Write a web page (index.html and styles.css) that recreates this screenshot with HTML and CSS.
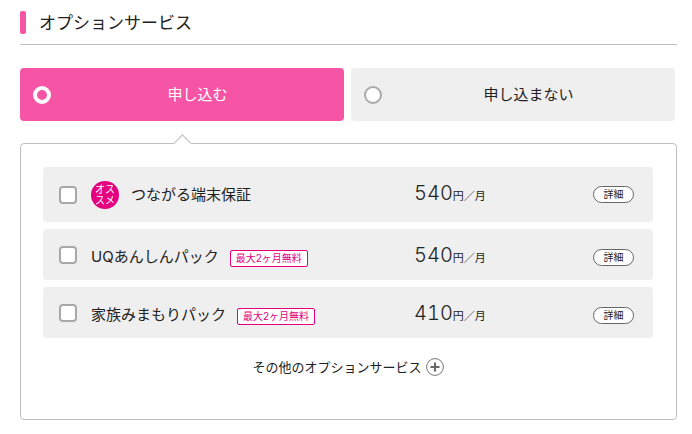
FILE: index.html
```html
<!DOCTYPE html>
<html lang="ja">
<head>
    <meta charset="UTF-8">
    <meta name="viewport" content="width=device-width, initial-scale=1.0">
    <title>オプションサービス</title>
    <link rel="stylesheet" href="styles.css">
</head>
<body>

    <h2 class="heading">オプションサービス</h2>

    <!-- 申し込み選択 -->
    <div class="choices">
        <label class="choice selected">
            <input type="radio" name="option" class="radio" checked>
            <span class="choice-text">申し込む</span>
        </label>
        <label class="choice">
            <input type="radio" name="option" class="radio">
            <span class="choice-text">申し込まない</span>
        </label>
    </div>

    <!-- オプション一覧 -->
    <div class="panel">
        <div class="option recommended">
            <input type="checkbox" class="check" id="hosho">
            <label class="name" for="hosho"><span class="osusume">オス<br>スメ</span>つながる端末保証</label>
            <p class="price"><span class="num">540</span>円／月</p>
            <button type="button" class="detail">詳細</button>
        </div>
        <div class="option">
            <input type="checkbox" class="check" id="anshin">
            <label class="name" for="anshin">UQあんしんパック<span class="free">最大2ヶ月無料</span></label>
            <p class="price"><span class="num">540</span>円／月</p>
            <button type="button" class="detail">詳細</button>
        </div>
        <div class="option">
            <input type="checkbox" class="check" id="mimamori">
            <label class="name" for="mimamori">家族みまもりパック<span class="free">最大2ヶ月無料</span></label>
            <p class="price"><span class="num">410</span>円／月</p>
            <button type="button" class="detail">詳細</button>
        </div>

        <button type="button" class="more">
            その他のオプションサービス
            <svg class="plus" width="18" height="18" viewBox="0 0 18 18">
                <circle cx="9" cy="9" r="8.4" fill="#fff" stroke="#777"/>
                <path d="M9 4.5v9M4.5 9h9" stroke="#666" stroke-width="2"/>
            </svg>
        </button>
    </div>

</body>
</html>
```

FILE: styles.css
```css
* {
    box-sizing: border-box;
}

body {
    margin: 0;
    padding: 11px 15px 14px 20px;
    font-family: Inter, "Noto Sans CJK JP", sans-serif;
    font-size: 15px;
    font-weight: 400;
    line-height: 24px;
    color: #222;
    background-color: #fff;
}

button {
    font: inherit;
    color: inherit;
    cursor: pointer;
}

.heading {
    display: flex;
    gap: 13px;
    margin: 0 0 23px;
    padding-bottom: 8px;
    border-bottom: 1px solid #bfbfbf;
    font-size: 17px;
    font-weight: 400;
    line-height: 25px;
}
.heading::before {
    content: "";
    width: 6px;
    height: 23px;
    border-radius: 2px;
    background-color: #f655a6;
}

/* 選択ボタン */
.choices {
    display: grid;
    grid-template-columns: 1fr 1fr;
    gap: 7px;
    padding-right: 2px;
}

.choice {
    display: flex;
    align-items: center;
    height: 53px;
    padding: 0 0 0 13px;
    border-radius: 4px;
    background-color: #efefef;
    cursor: pointer;
}
.choice.selected {
    background-color: #f655a6;
    color: #fff;
}

.choice-text {
    flex: 1;
    text-align: center;
}

.radio {
    appearance: none;
    width: 18px;
    height: 18px;
    margin: 0;
    border: 2px solid #aaa;
    border-radius: 50%;
    background-color: #fff;
}
.radio:checked {
    border: 4px solid #fff;
    background-color: #f655a6;
}

/* 一覧の枠 */
.panel {
    position: relative;
    display: flex;
    flex-direction: column;
    gap: 7px;
    margin-top: 22px;
    padding: 23px 23px 40px 22px;
    border: 1px solid #bfbfbf;
    border-radius: 4px;
}
.panel::before {
    content: "";
    position: absolute;
    top: -7px;
    left: calc(25% - 9px);
    width: 12px;
    height: 12px;
    border-top: 1px solid #bfbfbf;
    border-left: 1px solid #bfbfbf;
    background-color: #fff;
    transform: rotate(45deg);
}

.option {
    display: grid;
    grid-template-columns: 18px 1fr 179px 41px;
    align-items: center;
    min-height: 51px;
    padding: 0 19px 0 16px;
    border-radius: 4px;
    background-color: #efefef;
}
.recommended {
    min-height: 55px;
}

.check {
    appearance: none;
    width: 18px;
    height: 18px;
    margin: 0;
    border: 2px solid #a8a8a8;
    border-radius: 4px;
    background-color: #fff;
}
.check:checked {
    background-color: #f655a6;
}

.name {
    display: flex;
    align-items: center;
    padding: 4px 0 0 14px;
}
.recommended .name {
    padding-top: 0;
}

.osusume {
    width: 28px;
    height: 28px;
    margin-right: 12px;
    padding-top: 3px;
    border-radius: 50%;
    background-color: #e4007f;
    color: #fff;
    font-size: 10px;
    line-height: 11px;
    text-align: center;
}

.free {
    margin: 4px 0 0 11px;
    padding: 0 5px;
    border: 1px solid #e4007f;
    border-radius: 2px;
    background-color: #fff;
    color: #e4007f;
    font-size: 10px;
    line-height: 15px;
}

.price {
    margin: 4px 0 0;
    font-size: 11px;
}
.recommended .price {
    margin-top: 0;
}

.num {
    font-size: 20px;
    font-weight: 300;
    font-variant-numeric: tabular-nums;
}

.detail {
    height: 17px;
    margin-top: 5px;
    padding: 0;
    border: 1px solid #666;
    border-radius: 9px;
    background-color: #fff;
    font-size: 10px;
    line-height: 15px;
}
.recommended .detail {
    margin-top: 0;
}

.more {
    display: flex;
    align-items: center;
    align-self: center;
    gap: 4px;
    margin-top: 10px;
    padding: 0;
    border: none;
    background: none;
    font-size: 13px;
}
```
